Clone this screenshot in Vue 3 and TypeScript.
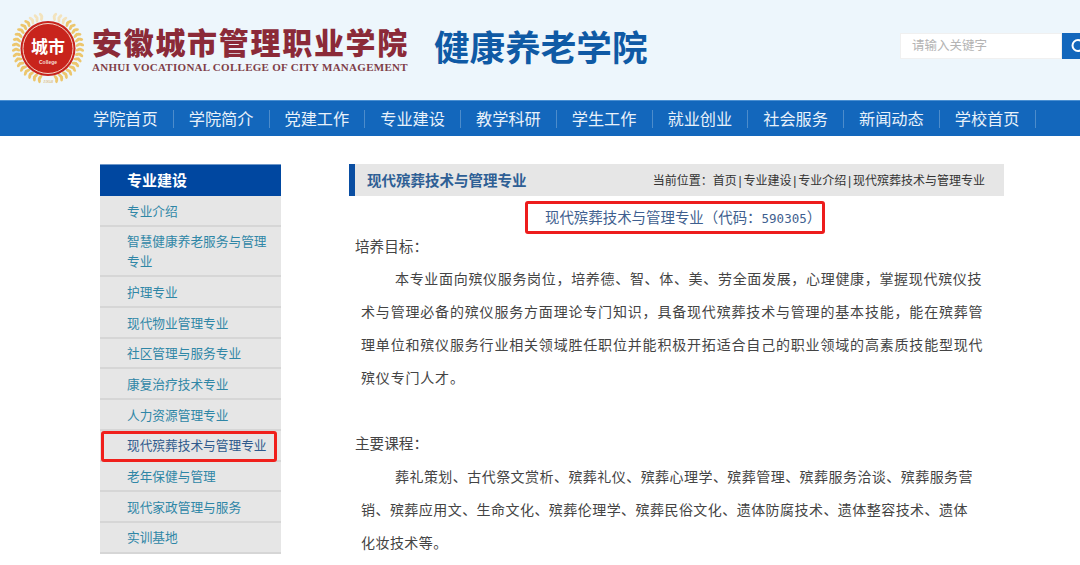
<template>
  <div class="page">
    <header class="top">
      <svg class="logo" width="86" height="86" viewBox="0 0 86 86">
        <ellipse
          v-for="(leaf, i) in leaves"
          :key="i"
          :cx="leaf.x"
          :cy="leaf.y"
          rx="1.5"
          ry="2.9"
          :fill="leaf.fill"
          :transform="`rotate(${leaf.rot} ${leaf.x} ${leaf.y})`"
        />
        <circle cx="43" cy="43.5" r="27.5" fill="#c8241c" />
        <circle cx="43" cy="43.5" r="25" fill="none" stroke="#f3d6c8" stroke-width="1" />
        <text x="43" y="47.5" class="logo-cn">城市</text>
        <text x="43" y="58.5" class="logo-en">College</text>
        <text x="43" y="78" class="logo-year">1958</text>
      </svg>
      <div class="school">
        <div class="school-cn">安徽城市管理职业学院</div>
        <div class="school-en">ANHUI VOCATIONAL COLLEGE OF CITY MANAGEMENT</div>
      </div>
      <div class="dept">健康养老学院</div>
      <div class="search">
        <span class="search-input">请输入关键字</span>
        <span class="search-btn">
          <svg width="18" height="26" viewBox="0 0 18 26">
            <circle cx="16" cy="12.5" r="5.5" fill="none" stroke="#fff" stroke-width="2" />
          </svg>
        </span>
      </div>
    </header>

    <nav class="nav">
      <a v-for="item in navItems" :key="item" class="nav-item">{{ item }}</a>
    </nav>

    <main class="main">
      <aside class="side">
        <div class="side-head">专业建设</div>
        <a
          v-for="item in sideItems"
          :key="item"
          class="side-item"
          :class="{ active: item === activeItem }"
        >{{ item }}</a>
      </aside>

      <section class="content">
        <div class="content-head">
          <div class="content-title">{{ activeItem }}</div>
          <div class="crumbs">当前位置：首页 | 专业建设 | 专业介绍 | {{ activeItem }}</div>
        </div>
        <div class="major-row">
          <div class="major-name">现代殡葬技术与管理专业（代码：<span class="code">590305</span>）</div>
        </div>
        <p class="label">培养目标：</p>
        <p class="para">
          <span v-for="line in goalLines" :key="line" class="line">{{ line }}</span>
        </p>
        <p class="label label-gap">主要课程：</p>
        <p class="para para-narrow">
          <span v-for="line in courseLines" :key="line" class="line">{{ line }}</span>
        </p>
      </section>
    </main>
  </div>
</template>

<script setup lang="ts">
interface Leaf {
  x: number
  y: number
  rot: number
  fill: string
}

const navItems: string[] = [
  '学院首页',
  '学院简介',
  '党建工作',
  '专业建设',
  '教学科研',
  '学生工作',
  '就业创业',
  '社会服务',
  '新闻动态',
  '学校首页'
]

const activeItem = '现代殡葬技术与管理专业'

const sideItems: string[] = [
  '专业介绍',
  '智慧健康养老服务与管理专业',
  '护理专业',
  '现代物业管理专业',
  '社区管理与服务专业',
  '康复治疗技术专业',
  '人力资源管理专业',
  activeItem,
  '老年保健与管理',
  '现代家政管理与服务',
  '实训基地'
]

const goalLines: string[] = [
  '本专业面向殡仪服务岗位，培养德、智、体、美、劳全面发展，心理健康，掌握现代殡仪技',
  '术与管理必备的殡仪服务方面理论专门知识，具备现代殡葬技术与管理的基本技能，能在殡葬管',
  '理单位和殡仪服务行业相关领域胜任职位并能积极开拓适合自己的职业领域的高素质技能型现代',
  '殡仪专门人才。'
]

const courseLines: string[] = [
  '葬礼策划、古代祭文赏析、殡葬礼仪、殡葬心理学、殡葬管理、殡葬服务洽谈、殡葬服务营',
  '销、殡葬应用文、生命文化、殡葬伦理学、殡葬民俗文化、遗体防腐技术、遗体整容技术、遗体',
  '化妆技术等。'
]

// wheat wreath: two mirrored arcs of leaves round the badge
const leaves: Leaf[] = []
for (const side of [-1, 1]) {
  for (let deg = 12; deg <= 170; deg += 9) {
    const rad = (deg * Math.PI) / 180
    for (const [r, lean] of [[30.5, -24], [33.5, 24]]) {
      leaves.push({
        x: 43 + side * r * Math.sin(rad),
        y: 43 - r * Math.cos(rad),
        rot: side * (deg + lean),
        fill: deg < 32 ? '#f3e3bd' : '#ecc66d'
      })
    }
  }
}
</script>

<style>
html,
body {
  margin: 0;
  background: #fff;
}
</style>

<style scoped>
.page {
  width: 1080px;
  height: 565px;
  overflow: hidden;
  font-family: "Liberation Sans", "Noto Sans CJK SC", sans-serif;
  color: #333;
}

.top {
  height: 100px;
  background: #edf6fc;
  display: flex;
  align-items: flex-start;
  box-sizing: border-box;
  padding: 5px 0 0 5px;
}

.logo {
  flex-shrink: 0;
  display: block;
}

.logo-cn {
  font-family: "Noto Sans CJK SC", sans-serif;
  font-size: 17px;
  font-weight: 700;
  fill: #fff;
  text-anchor: middle;
}

.logo-en {
  font-family: "Liberation Sans", sans-serif;
  font-size: 5px;
  font-weight: 700;
  fill: #f6ddd2;
  text-anchor: middle;
}

.logo-year {
  font-family: "Liberation Serif", serif;
  font-size: 5px;
  font-style: italic;
  fill: #d9ab4f;
  text-anchor: middle;
}

.school {
  margin: 18px 0 0 1px;
  width: 317px;
  flex-shrink: 0;
}

.school-cn {
  font-family: "Noto Sans CJK SC", sans-serif;
  font-size: 30px;
  font-weight: 900;
  line-height: 36px;
  letter-spacing: 1.7px;
  color: #8b2a38;
  white-space: nowrap;
}

.school-en {
  font-family: "Liberation Serif", serif;
  font-size: 11px;
  font-weight: 700;
  line-height: 14px;
  margin-top: 1px;
  letter-spacing: 0.28px;
  color: #7f3f49;
  white-space: nowrap;
}

.dept {
  margin: 20px 0 0 25px;
  font-family: "Noto Sans CJK SC", sans-serif;
  font-size: 35.6px;
  font-weight: 700;
  line-height: 42px;
  color: #0f5aa5;
  white-space: nowrap;
}

.search {
  margin: 28px 0 0 auto;
  display: flex;
  height: 26px;
  width: 180px;
  flex-shrink: 0;
}

.search-input {
  width: 162px;
  box-sizing: border-box;
  padding-left: 11px;
  background: #fff;
  border: 1px solid #f0f0f0;
  font-size: 12.5px;
  line-height: 25px;
  color: #b4b4b4;
}

.search-btn {
  width: 18px;
  background: #1367bc;
  display: block;
}

.search-btn svg {
  display: block;
}

.nav {
  height: 36px;
  background: #1367bc;
  border-top: 1px solid #4a8fd2;
  box-sizing: border-box;
  padding: 9px 0 0 78px;
  display: flex;
}

.nav-item {
  height: 18px;
  padding: 0 15px;
  border-right: 1px solid #4d8ccb;
  font-size: 16.2px;
  line-height: 19px;
  color: #e8f1fa;
  white-space: nowrap;
}

.main {
  display: flex;
  align-items: flex-start;
  padding: 28px 0 0 100px;
}

.side {
  width: 181px;
  flex-shrink: 0;
  margin-right: 68px;
}

.side-head {
  height: 32px;
  box-sizing: border-box;
  padding-left: 27px;
  background: #0047a0;
  border-top: 1px solid #6e97c9;
  font-size: 15px;
  font-weight: 700;
  line-height: 31px;
  color: #fff;
}

.side-item {
  display: block;
  position: relative;
  box-sizing: border-box;
  padding: 5.5px 10px 3.2px 27px;
  background: #e6e6e6;
  border-bottom: 2px solid #d6d6d6;
  font-size: 12.7px;
  line-height: 20px;
  color: #2f86a6;
}

.side-item.active {
  color: #2f5a8c;
}

.side-item.active::after {
  content: "";
  position: absolute;
  left: 1px;
  right: 4px;
  top: 0;
  bottom: -2px;
  border: 3px solid #f0201c;
  border-radius: 3px;
}

.content {
  width: 655px;
  flex-shrink: 0;
}

.content-head {
  height: 32px;
  box-sizing: border-box;
  padding: 0 19px 2px 12px;
  background: #e6e6e6;
  border-left: 6px solid #0a4ea2;
  display: flex;
  align-items: center;
  justify-content: space-between;
}

.content-title {
  font-size: 14.5px;
  font-weight: 700;
  color: #2e5f95;
}

.crumbs {
  font-size: 12px;
  word-spacing: -1.5px;
  color: #333;
  white-space: nowrap;
}

.major-row {
  display: flex;
  padding: 5px 0 0 176px;
}

.major-name {
  box-sizing: border-box;
  width: 300px;
  height: 33px;
  padding-left: 17px;
  border: 3px solid #ed1c1c;
  border-radius: 3px;
  font-size: 14.45px;
  line-height: 29px;
  color: #3f5f8f;
  white-space: nowrap;
}

.code {
  font-family: "DejaVu Sans Mono", "Liberation Mono", monospace;
  font-size: 12.5px;
}

.label {
  margin: 3px 0 0 6px;
  font-size: 14.6px;
  line-height: 20px;
  color: #444;
}

.label-gap {
  margin-top: 39px;
}

.para {
  margin: 6px 0 0 12px;
  font-size: 14px;
  color: #444;
}

.line {
  display: block;
  line-height: 33px;
  letter-spacing: 0.82px;
  white-space: nowrap;
}

.line:first-child {
  padding-left: 34px;
  letter-spacing: 0.68px;
}

.para-narrow {
  margin-top: 7px;
}

.para-narrow .line {
  letter-spacing: 0.45px;
}
</style>
